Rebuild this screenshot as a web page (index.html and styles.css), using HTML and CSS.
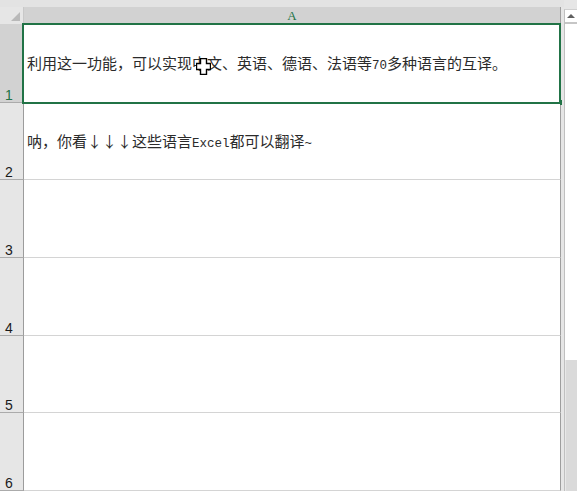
FILE: index.html
```html
<!DOCTYPE html>
<html lang="zh-CN">
<head>
    <meta charset="UTF-8">
    <title>Excel 翻译</title>
    <link rel="stylesheet" href="styles.css">
</head>
<body>

    <div class="sheet">
        <div class="main">
            <div class="top-strip"></div>

            <div class="head-row">
                <div class="corner"><span class="corner-tri"></span></div>
                <div class="col-head">A</div>
            </div>

            <div class="row row-first">
                <div class="rh selected">1</div>
                <div class="cell"><span>利用这一功能，可以实现中文、英语、德语、法语等<span class="latin">70</span>多种语言的互译。</span></div>
            </div>
            <div class="row">
                <div class="rh">2</div>
                <div class="cell"><span>呐，你看↓↓↓这些语言<span class="latin">Excel</span>都可以翻译<span class="latin">~</span></span></div>
            </div>
            <div class="row">
                <div class="rh">3</div>
                <div class="cell"></div>
            </div>
            <div class="row">
                <div class="rh">4</div>
                <div class="cell"></div>
            </div>
            <div class="row">
                <div class="rh">5</div>
                <div class="cell"></div>
            </div>
            <div class="row">
                <div class="rh">6</div>
                <div class="cell"></div>
            </div>
        </div>

        <div class="vscroll">
            <div class="scroll-box">
                <div class="scroll-up"><span class="arrow-up"></span></div>
                <div class="scroll-track"></div>
                <div class="scroll-thumb"></div>
            </div>
        </div>

        <!-- active cell A1 -->
        <div class="selection"><span class="fill-handle"></span></div>

        <!-- mouse cursor -->
        <svg class="cursor" width="15" height="17" viewBox="0 0 15 17">
            <path d="M4.5 0.5 H10.5 V5.5 H14.5 V11.5 H10.5 V16.5 H4.5 V11.5 H0.5 V5.5 H4.5 Z" fill="#fff" stroke="#000" stroke-width="1.4"/>
        </svg>
    </div>

</body>
</html>
```

FILE: styles.css
```css
body {
    margin: 0;
    padding: 0;
    background: #e6e6e6;
    overflow: hidden;
}

.sheet {
    position: relative;
    display: flex;
    width: 577px;
    height: 491px;
    overflow: hidden;
}

.main {
    width: 564px;
    display: flex;
    flex-direction: column;
    background: #e6e6e6;
}

.top-strip {
    height: 7px;
    background: #e3e3e3;
}

.head-row {
    display: flex;
    height: 17px;
}

.corner {
    position: relative;
    width: 24px;
    box-sizing: border-box;
    border-right: 1px solid #c8c8c8;
    background: #e6e6e6;
}

.corner-tri {
    position: absolute;
    right: 3px;
    bottom: 3px;
    width: 0;
    height: 0;
    border-left: 9px solid transparent;
    border-bottom: 9px solid #b9b9b9;
}

.col-head {
    width: 537px;
    box-sizing: border-box;
    border-right: 1px solid #9e9e9e;
    background: #d2d2d2;
    color: #217346;
    font-family: "Liberation Serif", serif;
    font-size: 13px;
    line-height: 18px;
    text-align: center;
}

.row {
    display: flex;
    height: 78px;
}

.row-first {
    height: 79px;
}

.rh {
    width: 24px;
    box-sizing: border-box;
    border-right: 1px solid #9c9c9c;
    border-bottom: 1px solid #ababab;
    background: #e6e6e6;
    color: #1a1a1a;
    font-family: "Liberation Sans", sans-serif;
    font-size: 14px;
    display: flex;
    align-items: flex-end;
    padding-left: 5px;
    line-height: 14px;
}

.rh.selected {
    background: #d2d2d2;
    color: #217346;
}

.cell {
    width: 537px;
    box-sizing: border-box;
    border-right: 1px solid #9e9e9e;
    border-bottom: 1px solid #d4d4d4;
    background: #fff;
    color: #2b2b2b;
    font-family: "Noto Sans CJK SC", sans-serif;
    font-size: 15px;
    display: flex;
    align-items: center;
    padding-left: 3px;
    white-space: nowrap;
}

.latin {
    font-family: "Liberation Mono", monospace;
    font-size: 12.5px;
}

.vscroll {
    width: 13px;
    padding-top: 9px;
    background: #e6e6e6;
    display: flex;
    flex-direction: column;
}

.scroll-box {
    flex: 1;
    display: flex;
    flex-direction: column;
    border-left: 1px solid #c0c0c0;
    border-top: 1px solid #d0d0d0;
    background: #fff;
}

.scroll-up {
    height: 12px;
    border-bottom: 2px solid #c6c6c6;
    display: flex;
    justify-content: center;
    align-items: center;
}

.arrow-up {
    width: 0;
    height: 0;
    border-left: 4px solid transparent;
    border-right: 4px solid transparent;
    border-bottom: 4px solid #606060;
}

.scroll-track {
    height: 336px;
}

.scroll-thumb {
    flex: 1;
    background: #dadada;
    border-left: 1px solid #e8e8e8;
}

.selection {
    position: absolute;
    left: 22px;
    top: 23px;
    width: 535px;
    height: 77px;
    border: 2px solid #217346;
}

.fill-handle {
    position: absolute;
    right: -3px;
    bottom: -3px;
    width: 2px;
    height: 5px;
    background: #217346;
}

.cursor {
    position: absolute;
    left: 196px;
    top: 58px;
}
```
